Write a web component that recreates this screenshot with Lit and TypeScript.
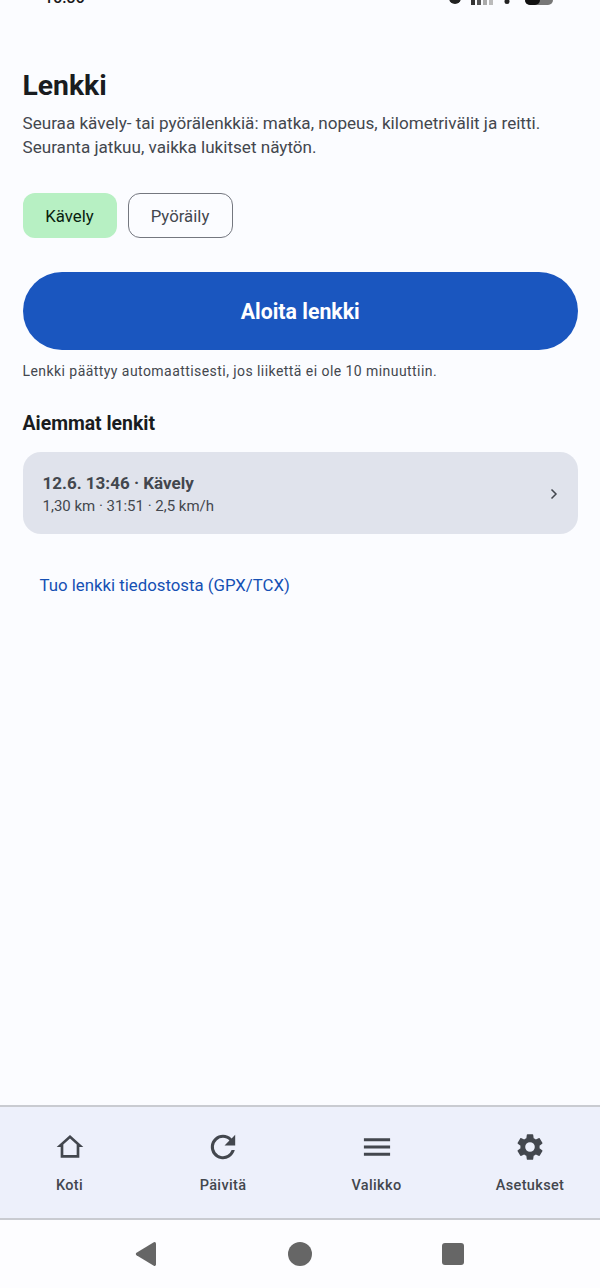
import { LitElement, html, css, svg } from "lit";
import { customElement } from "lit/decorators.js";

const navItems = [
  {
    label: "Koti",
    box: "0 0 24 24",
    icon: svg`<path fill-rule="evenodd" d="M12 3L2 12h3v8h14v-8h3L12 3zm0 2.7l5 4.5V18H7v-7.8l5-4.5z"/>`,
  },
  {
    label: "Päivitä",
    box: "1.5 1.5 21 21",
    icon: svg`<path d="M17.65 6.35A7.96 7.96 0 0 0 12 4a8 8 0 1 0 7.74 10h-2.08A6 6 0 1 1 12 6c1.66 0 3.14.69 4.22 1.78L13 11h7V4l-2.35 2.35z"/>`,
  },
  {
    label: "Valikko",
    box: "1 1 22 22",
    icon: svg`<path d="M3 18h18v-2H3v2zm0-5h18v-2H3v2zm0-7v2h18V6H3z"/>`,
  },
  {
    label: "Asetukset",
    box: "0 0 24 24",
    icon: svg`<path d="M19.14 12.94c.04-.3.06-.61.06-.94 0-.32-.02-.64-.07-.94l2.03-1.58a.49.49 0 0 0 .12-.61l-1.92-3.32a.488.488 0 0 0-.59-.22l-2.39.96c-.5-.38-1.03-.7-1.62-.94l-.36-2.54a.484.484 0 0 0-.48-.41h-3.84c-.24 0-.43.17-.47.41l-.36 2.54c-.59.24-1.13.57-1.62.94l-2.39-.96c-.22-.08-.47 0-.59.22L2.74 8.87c-.12.21-.08.47.12.61l2.03 1.58c-.05.3-.09.63-.09.94s.02.64.07.94l-2.03 1.58a.49.49 0 0 0-.12.61l1.92 3.32c.12.22.37.29.59.22l2.39-.96c.5.38 1.03.7 1.62.94l.36 2.54c.05.24.24.41.48.41h3.84c.24 0 .44-.17.47-.41l.36-2.54c.59-.24 1.13-.56 1.62-.94l2.39.96c.22.08.47 0 .59-.22l1.92-3.32c.12-.22.07-.47-.12-.61l-2.01-1.58zM12 15.6A3.6 3.6 0 1 1 12 8.4a3.6 3.6 0 0 1 0 7.2z"/>`,
  },
];

@customElement("app-root")
export class AppRoot extends LitElement {
  static styles = css`
    :host {
      display: flex;
      flex-direction: column;
      height: 1288px;
      background: #fbfcff;
      font-family: Roboto, "Noto Sans", sans-serif;
      color: #191c20;
      overflow: hidden;
    }
    .status {
      height: 20px;
      flex: none;
      display: flex;
      justify-content: space-between;
      padding: 0 40px 0 44px;
      overflow: hidden;
    }
    .clock {
      font-size: 16px;
      font-weight: 500;
      line-height: 16px;
      margin-top: -10px;
      color: #1a1a1a;
    }
    .status-icons {
      margin-top: -14px;
      display: block;
    }
    main {
      flex: 1;
      padding: 48px 22px 0 22.5px;
      min-height: 0;
    }
    h1 {
      margin: 0;
      font-size: 28.3px;
      line-height: 36px;
      font-weight: 700;
      color: #191c20;
    }
    .intro {
      margin: 7px 0 0;
      font-size: 17.1px;
      line-height: 24px;
      color: #43474e;
    }
    .modes {
      display: flex;
      gap: 11px;
      margin-top: 34px;
    }
    .mode {
      height: 45px;
      box-sizing: border-box;
      border-radius: 12px;
      display: flex;
      align-items: center;
      justify-content: center;
      font-size: 16.8px;
      font-weight: 450;
    }
    .mode.on {
      width: 94px;
      background: #b7f0c3;
      color: #08210f;
    }
    .mode.off {
      width: 105px;
      border: 1.5px solid #74777f;
      color: #43474e;
    }
    .start {
      margin-top: 34px;
      height: 78px;
      border-radius: 39px;
      background: #1a56bf;
      color: #fff;
      display: flex;
      align-items: center;
      justify-content: center;
      font-size: 21.3px;
      font-weight: 700;
    }
    .note {
      margin: 12px 0 0;
      font-size: 14px;
      line-height: 18px;
      letter-spacing: 0.44px;
      color: #43474e;
    }
    h2 {
      margin: 31px 0 0;
      font-size: 19.4px;
      line-height: 26px;
      font-weight: 700;
      color: #191c20;
    }
    .run {
      margin-top: 15px;
      height: 82px;
      box-sizing: border-box;
      border-radius: 18px;
      background: #e0e3ec;
      padding: 2px 20px 0 20px;
      display: flex;
      align-items: center;
      justify-content: space-between;
      color: #43474e;
    }
    .run-title {
      font-size: 17px;
      line-height: 22px;
      font-weight: 700;
    }
    .run-meta {
      margin-top: 2px;
      font-size: 15px;
      line-height: 20px;
    }
    .run svg {
      display: block;
    }
    .link {
      margin: 39px 0 0 17px;
      font-size: 16.8px;
      line-height: 24px;
      font-weight: 400;
      color: #1550b4;
    }
    nav {
      flex: none;
      height: 115px;
      box-sizing: border-box;
      background: #edf0fb;
      border-top: 2px solid #c9cbd1;
      border-bottom: 2px solid #c9cbd1;
      display: grid;
      grid-template-columns: repeat(4, 70px);
      justify-content: space-between;
      padding: 0 35px 0 34.5px;
      color: #43474e;
    }
    .tab {
      display: flex;
      flex-direction: column;
      align-items: center;
      padding-top: 24px;
      font-size: 14.5px;
      font-weight: 500;
      letter-spacing: 0.35px;
      white-space: nowrap;
    }
    .tab svg {
      width: 32px;
      height: 32px;
      fill: #43474e;
      margin-bottom: 14px;
    }
    .sysnav {
      flex: none;
      height: 68px;
      display: flex;
      align-items: center;
      justify-content: center;
      gap: 130px;
      padding-right: 2px;
      background: #fdfdff;
    }
    .sysnav svg {
      display: block;
      fill: #666;
    }
  `;

  render() {
    return html`
      <div class="status">
        <div class="clock">15:36</div>
        <svg class="status-icons" width="124" height="24" viewBox="0 0 124 24">
          <circle cx="19" cy="12" r="6" fill="#222"></circle>
          <rect x="35" y="8" width="4" height="11" fill="#333"></rect>
          <rect x="41" y="8" width="4" height="11" fill="#555"></rect>
          <rect x="47" y="8" width="4" height="11" fill="#aaa"></rect>
          <rect x="53" y="8" width="4" height="11" fill="#bbb"></rect>
          <circle cx="71" cy="15.5" r="2.5" fill="#222"></circle>
          <rect x="89" y="0" width="28" height="19" rx="5" fill="#777"></rect>
          <rect x="89" y="0" width="15" height="19" rx="5" fill="#111"></rect>
        </svg>
      </div>
      <main>
        <h1>Lenkki</h1>
        <p class="intro">
          Seuraa kävely- tai pyörälenkkiä: matka, nopeus, kilometrivälit ja reitti.<br />
          Seuranta jatkuu, vaikka lukitset näytön.
        </p>
        <div class="modes">
          <div class="mode on">Kävely</div>
          <div class="mode off">Pyöräily</div>
        </div>
        <div class="start">Aloita lenkki</div>
        <p class="note">Lenkki päättyy automaattisesti, jos liikettä ei ole 10 minuuttiin.</p>
        <h2>Aiemmat lenkit</h2>
        <div class="run">
          <div>
            <div class="run-title">12.6. 13:46 · Kävely</div>
            <div class="run-meta">1,30 km · 31:51 · 2,5 km/h</div>
          </div>
          <svg width="8" height="12" viewBox="0 0 8 12" fill="none" stroke="#43474e" stroke-width="1.5">
            <path d="M1.5 1.5 L6 6 L1.5 10.5"></path>
          </svg>
        </div>
        <div class="link">Tuo lenkki tiedostosta (GPX/TCX)</div>
      </main>
      <nav>
        ${navItems.map(
          (item) => html`
            <div class="tab">
              <svg viewBox=${item.box}>${item.icon}</svg>
              <span>${item.label}</span>
            </div>
          `
        )}
      </nav>
      <div class="sysnav">
        <svg width="24" height="26" viewBox="0 0 24 26">
          <path d="M22 2.5 V23.5 a1.5 1.5 0 0 1 -2.2 1.2 L2.5 14.2 a1.5 1.5 0 0 1 0 -2.5 L19.8 1.3 A1.5 1.5 0 0 1 22 2.5 z"></path>
        </svg>
        <svg width="24" height="24" viewBox="0 0 24 24"><circle cx="12" cy="12" r="12"></circle></svg>
        <svg width="22" height="22" viewBox="0 0 22 22"><rect width="22" height="22" rx="3"></rect></svg>
      </div>
    `;
  }
}
